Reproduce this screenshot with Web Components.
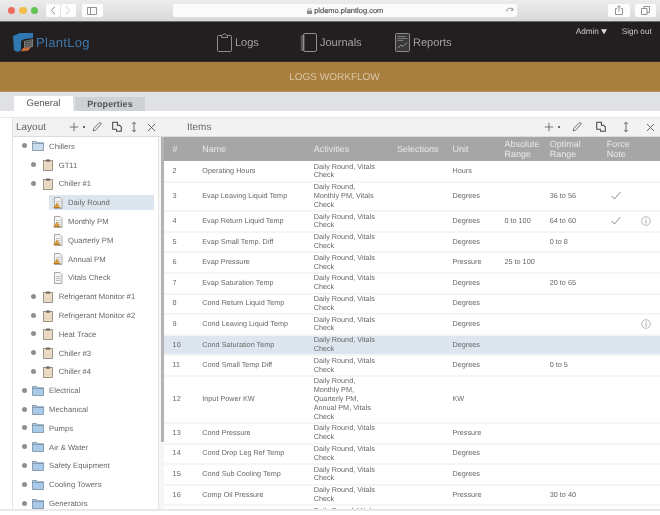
<!DOCTYPE html>
<html><head><meta charset="utf-8"><title>PlantLog</title>
<style>
html,body{margin:0;height:100%;overflow:hidden;background:#fff}
body{font-family:"Liberation Sans",Arial,sans-serif;text-rendering:geometricPrecision}
</style></head><body>
<pl-app></pl-app>
<script>
const ICONS={
 plus:'<path d="M7 1v12M1 7h12" stroke="#555" stroke-width="1.100" fill="none"/>',
 pencil:'<path d="M2.500 11.500l.7-2.800 6.500-6.500c.5-.5 1.300-.5 1.800 0s.5 1.300 0 1.800L5.300 10.800z" stroke="#666" stroke-width="1.100" fill="none"/>',
 copy:'<path d="M2 1.500h5.500v8H2z" stroke="#444" stroke-width="1.200" fill="#f2f2f2"/><path d="M7 5h3l2 2v5H6.500V9.500" stroke="#444" stroke-width="1.200" fill="#f2f2f2"/>',
 updown:'<path d="M7 1.500v11M5 3.600L7 1.300l2 2.300M5 10.400l2 2.300 2-2.300" stroke="#555" stroke-width="1" fill="none"/>',
 close:'<path d="M2.500 2.500l9 9M11.500 2.500l-9 9" stroke="#555" stroke-width="1.100" fill="none"/>'
};
function svg(name,w=14){return `<svg width="${w}" height="${w}" viewBox="0 0 14 14">${ICONS[name]}</svg>`}

class PlBrowserBar extends HTMLElement{constructor(){super();this.attachShadow({mode:'open'}).innerHTML=`<style>
:host{display:flex;align-items:center;height:21px;background:linear-gradient(#ececec,#d9d9d9);border-bottom:1px solid #6b6b6b;position:relative}
.dots{display:flex;gap:4.200px;margin-left:7.500px}
.dots i{width:7.500px;height:7.500px;border-radius:50%}
.btn{background:#fdfdfd;height:12.500px;border-radius:2px;display:flex;align-items:center;justify-content:center}
.nav{display:flex;gap:1px;margin-left:7.600px}
.addr{position:absolute;left:173px;width:344px;top:4px;height:13px;background:#fbfbfb;border-radius:2px;display:flex;align-items:center;justify-content:center;font:7.500px "Liberation Sans",sans-serif;color:#444;-webkit-text-stroke:.1px #444}
.r{position:absolute;top:4px}
svg{display:block}
</style>
<div class="dots"><i style="background:#ef6a5e"></i><i style="background:#f4bd4f"></i><i style="background:#61c354"></i></div>
<div class="nav"><div class="btn" style="width:14px"><svg width="6" height="9" viewBox="0 0 6 9"><path d="M5 .8L1.200 4.500 5 8.200" fill="none" stroke="#888"/></svg></div><div class="btn" style="width:15px"><svg width="6" height="9" viewBox="0 0 6 9"><path d="M1 .8l3.800 3.700L1 8.200" fill="none" stroke="#ccc"/></svg></div></div>
<div class="btn" style="width:21px;margin-left:6px"><svg width="10" height="8" viewBox="0 0 10 8"><path d="M.5.500h9v7h-9zM3.500.500v7" fill="none" stroke="#777" stroke-width=".8"/></svg></div>
<div class="addr"><svg width="5" height="6" viewBox="0 0 5 6" style="margin-right:2.500px"><rect y="2.500" width="5" height="3.500" fill="#888"/><path d="M1 2.500V1.500a1.500 1.500 0 013 0v1" fill="none" stroke="#888" stroke-width=".7"/></svg>pldemo.plantlog.com
<svg width="8" height="8" viewBox="0 0 8 8" style="position:absolute;right:3px;top:2.500px"><path d="M6.800 3.200A3 3 0 101 5M6.800 1v2.300H4.500" fill="none" stroke="#777" stroke-width=".7"/></svg></div>
<div class="btn r" style="left:608px;width:22px"><svg width="8" height="10" viewBox="0 0 8 10"><path d="M2 3.500H.5v6h7v-6H6M4 6.500V.7M2.400 2.200L4 .6l1.600 1.600" fill="none" stroke="#777" stroke-width=".8"/></svg></div>
<div class="btn r" style="left:635px;width:21px"><svg width="9" height="9" viewBox="0 0 9 9"><path d="M.5 2.500h5.500v6H.5zM3 2.500V.5h5.500v6H6" fill="none" stroke="#777" stroke-width=".8"/></svg></div>`}}
customElements.define('pl-browser-bar',PlBrowserBar);

class PlLogo extends HTMLElement{constructor(){super();this.attachShadow({mode:'open'}).innerHTML=`<style>
:host{display:flex;align-items:center;gap:3px;font:13px "Liberation Sans",sans-serif;color:#3b78ad;letter-spacing:.3px}
svg{display:block}</style>
<svg width="20" height="19" viewBox="0 0 20 19"><path d="M0 3L7 0h13v5l-9 1.200L8 8v9l-3 2-4-1.500z" fill="#2f78b4"/><path d="M11 8l9-2v8l-9 1z" fill="#77797a"/><path d="M12 9l7-1.300M12 11l7-1M12 13l7-.7" stroke="#2d2b2c" stroke-width=".7"/><path d="M8 18.500l2-3.500 8-1-2.500 3.500z" fill="#c86b3d"/></svg><slot></slot>`}}
customElements.define('pl-logo',PlLogo);

class PlNavItem extends HTMLElement{constructor(){super();this.attachShadow({mode:'open'}).innerHTML=`<style>
:host{display:flex;align-items:center;gap:3px;font:11px "Liberation Sans",sans-serif;color:#a3a3a3}
</style><slot name="icon"></slot><slot></slot>`}}
customElements.define('pl-nav-item',PlNavItem);

class PlHeader extends HTMLElement{constructor(){super();this.attachShadow({mode:'open'}).innerHTML=`<style>
:host{display:block;height:40px;background:#231f20;position:relative;box-shadow:inset 0 -1px 0 #3a2e22}
.wrap{display:flex;height:100%;align-items:center}
pl-logo{margin-left:13px;margin-top:1px}
.nav{position:absolute;left:217px;top:11px;display:flex}
.user{position:absolute;top:5px;right:0;font:8.200px "Liberation Sans",sans-serif;color:#c8c8c8;display:flex}
svg{display:block}
</style><div class="wrap"><pl-logo>PlantLog</pl-logo></div>
<div class="nav">
<pl-nav-item style="width:83px"><svg slot="icon" width="15" height="19" viewBox="0 0 15 19"><path d="M4.500 2.500H1.500a1 1 0 00-1 1v14a1 1 0 001 1h12a1 1 0 001-1v-14a1 1 0 00-1-1h-3M4.500 4.500v-2L7.500.7l3 1.800v2z" fill="none" stroke="#8f8f8f"/></svg>Logs</pl-nav-item>
<pl-nav-item style="width:95px"><svg slot="icon" width="17" height="19" viewBox="0 0 17 19"><rect x="3.500" y=".5" width="13" height="18" rx="1.500" fill="none" stroke="#8f8f8f"/><path d="M.8 3h4M.8 5h4M.8 7h4M.8 9h4M.8 11h4M.8 13h4M.8 15h4M.8 17h4" stroke="#9a9a9a" stroke-width=".9"/></svg>Journals</pl-nav-item>
<pl-nav-item><svg slot="icon" width="15" height="19" viewBox="0 0 15 19"><rect x=".5" y=".5" width="14" height="18" rx="1" fill="#3a3839" stroke="#8a8a8a"/><path d="M2.500 3.500h8M2.500 5.500h10M2.500 7.500h6" stroke="#8a8a8a" stroke-width=".8"/><path d="M3 15l3-3 2 1.500 4-4" fill="none" stroke="#9a9a9a"/></svg>Reports</pl-nav-item>
</div>
<div class="user"><span style="width:25.300px">Admin</span><svg width="6" height="5.500" viewBox="0 0 7 6" style="margin:2px 14.700px 0 0"><path d="M0 0h7L3.500 6z" fill="#ddd"/></svg><span style="width:38.300px">Sign out</span></div>`}}
customElements.define('pl-header',PlHeader);

class PlTitleBar extends HTMLElement{constructor(){super();this.attachShadow({mode:'open'}).innerHTML=`<style>
:host{display:flex;height:30px;background:#a87f3f;align-items:center;justify-content:center;padding-left:9px;box-sizing:border-box;font:10px "Liberation Sans",sans-serif;color:#d9c7a6;box-shadow:inset 0 -1px 0 #b29464}
</style><slot></slot>`}}
customElements.define('pl-title-bar',PlTitleBar);

class PlTabs extends HTMLElement{constructor(){super();this.attachShadow({mode:'open'}).innerHTML=`<style>
:host{display:flex;height:19px;background:#dfe1e5;align-items:flex-end;gap:2px;padding-left:14px;box-sizing:border-box;font:9.500px "Liberation Sans",sans-serif;color:#555}
div{display:flex;align-items:center;justify-content:center}
.a{width:59px;height:15px;background:#fff}
.b{width:70px;height:14px;background:#cdd0d5;font:bold 9px "Liberation Sans",sans-serif;color:#555;letter-spacing:.1px}
</style><div class="a">General</div><div class="b">Properties</div>`}}
customElements.define('pl-tabs',PlTabs);

class PlToolbar extends HTMLElement{constructor(){super();this.attachShadow({mode:'open'}).innerHTML=`<style>
:host{display:flex;align-items:center;height:19px;box-sizing:border-box;background:#f2f2f2;border-bottom:1px solid #dcdcdc;font:10px "Liberation Sans",sans-serif;color:#666;flex:none}
.t{flex:1}
.i{display:flex;align-items:center}
svg{display:block}
.dot{width:1.500px;height:1.500px;background:#555;border-radius:50%;margin:0 0 0 4px}
</style><div class="t"><slot></slot></div><div class="i">
${svg('plus',10)}<i class="dot"></i>
<span style="width:var(--g1)"></span>${svg('pencil',12)}
<span style="width:var(--g2)"></span>${svg('copy',12)}
<span style="width:var(--g3)"></span>${svg('updown',12)}
<span style="width:var(--g4)"></span>${svg('close',11)}</div>`}}
customElements.define('pl-toolbar',PlToolbar);

class PlTreeRow extends HTMLElement{
 constructor(){super();
 const lvl=+this.getAttribute('level'),kind=this.getAttribute('kind');
 const ic={
 folder:'<svg width="12" height="10" viewBox="0 0 12 10"><path d="M.5 9.500v-9h4l1 1.300h6v7.700z" fill="#a9cbe9" stroke="#6b7f90" stroke-width=".7"/><path d="M.5 2.500h11" stroke="#6b7f90" stroke-width=".6"/></svg>',
 open:'<svg width="12" height="10" viewBox="0 0 12 10"><path d="M.5 9.500v-9h4l1 1.300h6v7.700z" fill="#c7dcef" stroke="#6b7f90" stroke-width=".7"/><path d="M.5 2.500h11" stroke="#6b7f90" stroke-width=".6"/></svg>',
 board:'<svg width="10" height="12" viewBox="0 0 10 12"><rect x=".5" y="1.500" width="9" height="10" fill="#ead9c3" stroke="#8a8078" stroke-width=".8"/><rect x="3" y=".5" width="4" height="2.200" fill="#6f6a66"/></svg>',
 doc:'<svg width="10" height="12" viewBox="0 0 10 12"><path d="M1.500.5h5.500l2 2v9H1.500z" fill="#f3f3f3" stroke="#888" stroke-width=".7"/><path d="M3 4.500h4.500M3 6.500h4.500M3 8.500h4.500" stroke="#aaa" stroke-width=".6"/><path d="M.5 10.500L4 5.500l3 5z" fill="#d59a3c"/><path d="M.5 10.500h7" stroke="#b87f2a"/></svg>',
 plain:'<svg width="10" height="12" viewBox="0 0 10 12"><path d="M1.500.5h5.500l2 2v9H1.500z" fill="#f3f3f3" stroke="#888" stroke-width=".7"/><path d="M3 4.500h4.500M3 6.500h4.500M3 8.500h4.500" stroke="#999" stroke-width=".6"/></svg>'}[kind];
 const pad=[8.5,17.7,38.5][lvl],bm=[5.300,6.300,0][lvl],tm=[5.300,4.700,4.500][lvl];
 this.attachShadow({mode:'open'}).innerHTML=`<style>
 :host{display:flex;align-items:center;height:18.800px;padding-left:${pad}px;box-sizing:border-box;font:7.700px "Liberation Sans",sans-serif;color:#686868;flex:none}
 .b{width:5px;height:5px;border-radius:50%;background:#8f8f8f;margin-right:${bm}px;margin-top:-1px;flex:none}
 .ic{width:12px;display:flex;justify-content:center;flex:none}
 .tx{margin-left:${tm}px;white-space:nowrap}
 svg{display:block}
 </style>${lvl<2?'<i class="b"></i>':''}<span class="ic">${ic}</span><span class="tx"><slot></slot></span>`;
 }}
customElements.define('pl-tree-row',PlTreeRow);

class PlTree extends HTMLElement{constructor(){super();
 const data=[[0,'open','Chillers'],[1,'board','GT11'],[1,'board','Chiller #1'],[2,'doc','Daily Round',1],[2,'doc','Monthly PM'],[2,'doc','Quarterly PM'],[2,'doc','Annual PM'],[2,'plain','Vitals Check'],[1,'board','Refrigerant Monitor #1'],[1,'board','Refrigerant Monitor #2'],[1,'board','Heat Trace'],[1,'board','Chiller #3'],[1,'board','Chiller #4'],[0,'folder','Electrical'],[0,'folder','Mechanical'],[0,'folder','Pumps'],[0,'folder','Air &amp; Water'],[0,'folder','Safety Equipment'],[0,'folder','Cooling Towers'],[0,'folder','Generators']];
 this.attachShadow({mode:'open'}).innerHTML=`<style>
 :host{display:flex;flex-direction:column;flex:none;width:152px;border-left:1px solid #e4e4e4;box-sizing:border-box}
 .body{flex:1;min-height:0;display:flex}
 .list{width:146px;overflow:hidden;display:flex;flex-direction:column;background:#fff;border-right:1px solid #e6e6e6;box-sizing:border-box}
 .rail{flex:1;background:#f6f6f6;padding-left:1.500px}
 .thumb{width:3.500px;height:305px;background:#b4b4b4}
 pl-toolbar{--g1:6.500px;--g2:7.500px;--g3:5px;--g4:6.200px;padding:0 7.300px 0 3px}
 pl-tree-row[selected]{background:linear-gradient(#dde6ee,#dde6ee) no-repeat 36.300px 2px / 105px 15.400px}
 </style>
 <pl-toolbar>Layout</pl-toolbar>
 <div class="body"><div class="list">${data.map(d=>`<pl-tree-row level="${d[0]}" kind="${d[1]}"${d[3]?' selected':''}>${d[2]}</pl-tree-row>`).join('')}</div><div class="rail"><div class="thumb"></div></div></div>`}}
customElements.define('pl-tree',PlTree);

const COLS='29.700px 111.400px 83.300px 55.500px 52px 45.300px 57px 34.700px 1fr';
const DR='Daily Round, Vitals Check',MR='Daily Round, Monthly PM, Vitals Check',LONG='Daily Round, Monthly PM, Quarterly PM, Annual PM, Vitals Check';
class PlItemRow extends HTMLElement{constructor(){super();
 const g=a=>this.getAttribute(a)||'';
 const check=g('check')?'<svg width="10" height="9" viewBox="0 0 10 9" style="margin:-2px 0 0 4.500px"><path d="M.8 5l2.700 3L9.300 1" fill="none" stroke="#8c8c8c" stroke-width="1"/></svg>':'';
 const info=g('info')?'<svg width="10" height="10" viewBox="0 0 10 10"><circle cx="5" cy="5" r="4.300" fill="none" stroke="#999" stroke-width=".7"/><path d="M5 4.200v3.300M5 2.400v1" stroke="#888" stroke-width=".8"/></svg>':'';
 this.attachShadow({mode:'open'}).innerHTML=`<style>
 :host{display:grid;grid-template-columns:${COLS};padding:.5px 0 .5px 8.600px;border-bottom:2px solid #f5f5f5;align-items:center;font:7.250px/8.800px "Liberation Sans",sans-serif;color:#686868;background:${g('sel')?'#dde6ee':'#fff'};flex:none}
 .act{width:66px}
 svg{display:block}
 </style><div>${g('n')}</div><div>${g('name')}</div><div class="act">${g('act')}</div><div></div><div>${g('unit')}</div><div>${g('abs')}</div><div>${g('opt')}</div><div>${check}</div><div>${info}</div>`}}
customElements.define('pl-item-row',PlItemRow);

class PlItems extends HTMLElement{constructor(){super();
 const rows=[[2,'Operating Hours',DR,'Hours'],[3,'Evap Leaving Liquid Temp',MR,'Degrees','','36 to 56',1],[4,'Evap Return Liquid Temp',DR,'Degrees','0 to 100','64 to 60',1,1],[5,'Evap Small Temp. Diff',DR,'Degrees','','0 to 8'],[6,'Evap Pressure',DR,'Pressure','25 to 100'],[7,'Evap Saturation Temp',DR,'Degrees','','20 to 65'],[8,'Cond Return Liquid Temp',DR,'Degrees'],[9,'Cond Leaving Liquid Temp',DR,'Degrees','','','',1],[10,'Cond Saturation Temp',DR,'Degrees','','','','',1],[11,'Cond Small Temp Diff',DR,'Degrees','','0 to 5'],[12,'Input Power KW',LONG,'KW'],[13,'Cond Pressure',DR,'Pressure'],[14,'Cond Drop Leg Ref Temp',DR,'Degrees'],[15,'Cond Sub Cooling Temp',DR,'Degrees'],[16,'Comp Oil Pressure',DR,'Pressure','','30 to 40'],[17,'Comp Oil Temp',DR,'Degrees']];
 const esc=s=>String(s).replace(/"/g,'&quot;');
 this.attachShadow({mode:'open'}).innerHTML=`<style>
 :host{display:flex;flex-direction:column;flex:1;min-width:0}
 pl-toolbar{--g1:11.200px;--g2:12.600px;--g3:12.700px;--g4:13.300px;padding:0 3.700px 0 23px}
 .hd{display:grid;grid-template-columns:${COLS};padding-left:8.600px;height:24px;align-items:center;background:#a5a6a5;color:#e8e8e8;font:9px/10.500px "Liberation Sans",sans-serif;flex:none}
 .list{flex:1;min-height:0;overflow:hidden;display:flex;flex-direction:column;background:#fff;padding-top:1.200px}
 </style>
 <pl-toolbar>Items</pl-toolbar>
 <div class="hd"><div>#</div><div>Name</div><div>Activities</div><div>Selections</div><div>Unit</div><div>Absolute Range</div><div>Optimal Range</div><div>Force Note</div><div></div></div>
 <div class="list">${rows.map(r=>`<pl-item-row n="${r[0]}" name="${esc(r[1])}" act="${esc(r[2])}" unit="${r[3]}" abs="${r[4]||''}" opt="${r[5]||''}" check="${r[6]||''}" info="${r[7]||''}" sel="${r[8]||''}"></pl-item-row>`).join('')}</div>`}}
customElements.define('pl-items',PlItems);

class PlApp extends HTMLElement{constructor(){super();this.attachShadow({mode:'open'}).innerHTML=`<style>
:host{display:flex;flex-direction:column;width:660px;height:515px;background:#fff;overflow:hidden;filter:blur(.3px)}
.main{height:394px;margin-top:6px;padding-left:12px;display:flex;border-top:1px solid #e8e8e8;border-bottom:2px solid #e9e9e9;flex:none;box-sizing:border-box}
</style><pl-browser-bar></pl-browser-bar><pl-header></pl-header><pl-title-bar>LOGS WORKFLOW</pl-title-bar><pl-tabs></pl-tabs>
<div class="main"><pl-tree></pl-tree><pl-items></pl-items></div>`}}
customElements.define('pl-app',PlApp);
</script></body></html>
